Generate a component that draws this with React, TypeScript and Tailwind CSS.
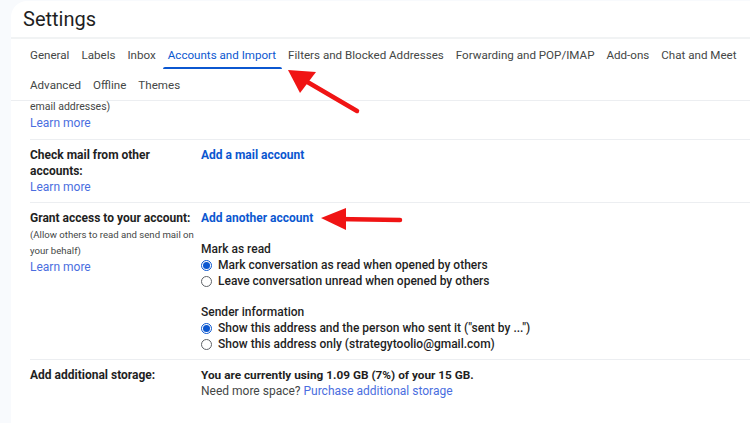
import React from "react";

const tabsTop = ["General", "Labels", "Inbox", "Accounts and Import", "Filters and Blocked Addresses", "Forwarding and POP/IMAP", "Add-ons", "Chat and Meet"];
const tabsBottom = ["Advanced", "Offline", "Themes"];

function Radio({ checked, label }: { checked?: boolean; label: string }) {
  return (
    <div className="flex items-center gap-[6px] h-4">
      {checked ? (
        <span className="w-[11px] h-[11px] rounded-full border border-[#0b57d0] flex items-center justify-center">
          <span className="w-[7px] h-[7px] rounded-full bg-[#0b57d0]" />
        </span>
      ) : (
        <span className="w-[11px] h-[11px] rounded-full border border-[#5f6368]" />
      )}
      <span className="font-medium text-[#1f1f1f]">{label}</span>
    </div>
  );
}

function Row({ label, children, className = "" }: { label: React.ReactNode; children: React.ReactNode; className?: string }) {
  return (
    <div className={`flex border-b border-[#eceef1] ${className}`}>
      <div className="w-[171px] shrink-0">{label}</div>
      <div className="flex-1">{children}</div>
    </div>
  );
}

function LearnMore() {
  return <div className="text-[#4a6ee0] h-4 leading-4">Learn more</div>;
}

export default function App() {
  return (
    <div className="relative w-[750px] h-[423px] overflow-hidden bg-[#f8fafd] pl-[11px] pt-px" style={{ fontFamily: "Roboto, 'Open Sans', sans-serif" }}>
      <div className="bg-white rounded-tl-2xl h-full flex flex-col text-[12px] leading-4">
        {/* Header */}
        <div className="h-[38px] shrink-0 flex items-center pl-3 border-b-2 border-[#f1f3f4]">
          <span className="text-[20px] text-[#1f1f1f]">Settings</span>
        </div>

        {/* Tabs */}
        <div className="shrink-0 pl-[19px] border-b border-[#eceef1] text-[11.6px] text-[#444746]">
          <div className="flex gap-[12px] h-[31px] items-center">
            {tabsTop.map((t) => (
              <div key={t} className={`relative h-full flex items-center whitespace-nowrap ${t === "Accounts and Import" ? "text-[#0b57d0]" : ""}`}>
                {t}
                {t === "Accounts and Import" && <span className="absolute -left-[5px] -right-[6px] bottom-[1px] h-[2px] bg-[#0b57d0] rounded-t" />}
              </div>
            ))}
          </div>
          <div className="flex gap-[12px] h-[30px] items-center">
            {tabsBottom.map((t) => (
              <div key={t}>{t}</div>
            ))}
          </div>
        </div>

        {/* Content, scrolled part-way down */}
        <div className="flex-1 overflow-hidden pl-[19px] text-[#1f1f1f]">
          <Row label={<div className="-mt-[2px]"><div className="text-[10.5px] text-[#444746] leading-4">email addresses)</div><LearnMore /></div>} className="pb-[8px]">
            <div className="-mt-[12px] font-medium text-[#0b57d0]">Add another email address</div>
          </Row>
          <Row label={<div><div className="font-bold">Check mail from other<br />accounts:</div><LearnMore /></div>} className="pt-[7px] pb-[7px]">
            <div className="font-bold text-[#0b57d0]">Add a mail account</div>
          </Row>
          <Row
            label={
              <div>
                <div className="font-bold">Grant access to your account:</div>
                <div className="mt-px text-[9.6px] text-[#444746] whitespace-nowrap">(Allow others to read and send mail on</div>
                <div className="text-[9.6px] text-[#444746]">your behalf)</div>
                <LearnMore />
              </div>
            }
            className="pt-[7px] pb-[7px]"
          >
            <div className="font-bold text-[#0b57d0]">Add another account</div>
            <div className="mt-[15px] font-medium">Mark as read</div>
            <Radio checked label="Mark conversation as read when opened by others" />
            <Radio label="Leave conversation unread when opened by others" />
            <div className="mt-[15px] font-medium">Sender information</div>
            <Radio checked label={'Show this address and the person who sent it ("sent by ...")'} />
            <Radio label="Show this address only (strategytoolio@gmail.com)" />
          </Row>
          <div className="flex pt-[7px]">
            <div className="w-[171px] shrink-0 font-bold">Add additional storage:</div>
            <div>
              <div className="font-bold text-[11.8px]">You are currently using 1.09 GB (7%) of your 15 GB.</div>
              <div className="text-[#444746]">
                Need more space? <span className="text-[#4a6ee0]">Purchase additional storage</span>
              </div>
            </div>
          </div>
        </div>
      </div>

      {/* Annotation arrows */}
      <svg className="absolute inset-0 pointer-events-none" width="750" height="423" viewBox="0 0 750 423">
        <line x1="357" y1="111" x2="304" y2="80" stroke="#f01414" strokeWidth="4.5" strokeLinecap="round" />
        <polygon points="288,70 316,72 300,93" fill="#f01414" />
        <line x1="400" y1="220" x2="336" y2="219" stroke="#f01414" strokeWidth="4.5" strokeLinecap="round" />
        <polygon points="321,218 346,208 346,230" fill="#f01414" />
      </svg>
    </div>
  );
}
